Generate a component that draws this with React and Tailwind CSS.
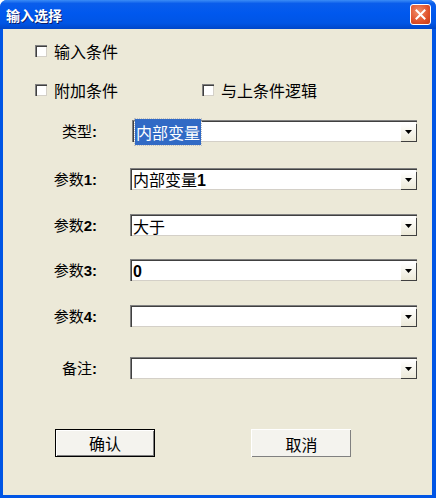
import React from 'react';

const font = { fontFamily: '"Noto Sans CJK SC", "Liberation Sans", sans-serif' };

const Checkbox = ({ label }) => (
  <div className="flex items-center h-[22px]">
    <span className="w-[12px] h-[12px] bg-white border-t border-l border-[#808080] border-b-white border-r-white shadow-[inset_1px_1px_0_#404040,inset_-1px_-1px_0_#d4d0c8]" />
    <span className="ml-[7px] text-[16px] leading-none text-black">{label}</span>
  </div>
);

const Arrow = () => (
  <div className="ml-auto mr-[1px] w-[16px] h-[18px] flex items-center justify-center bg-[linear-gradient(to_bottom,#ffffff,#ece9d8)] border-t border-l border-white border-b-[#808080] border-r-[#808080] shadow-[1px_1px_0_#404040]">
    <svg width="7" height="4" viewBox="0 0 7 4">
      <path d="M0 0H7L3.5 4Z" fill="#000" />
    </svg>
  </div>
);

const Combo = ({ children, offset }) => (
  <div className={`${offset} h-[22px] flex items-center bg-white border-t border-l border-[#808080] border-b-white border-r-white shadow-[inset_1px_1px_0_#404040,inset_-1px_-1px_0_#d4d0c8]`}>
    <div className="pl-[2px] text-[16px] leading-none text-black whitespace-nowrap">{children}</div>
    <Arrow />
  </div>
);

const Bold = ({ children }) => (
  <span className="font-bold" style={{ fontFamily: '"Liberation Sans", sans-serif' }}>{children}</span>
);

const Row = ({ label, digit, children, top, offset = 'ml-[33px] w-[287px]' }) => (
  <div className={`flex items-center h-[22px] ${top}`}>
    <div className="w-[94px] text-right text-[15px] leading-none text-black whitespace-nowrap">
      {label}
      {digit && <Bold>{digit}</Bold>}
      <Bold>:</Bold>
    </div>
    <Combo offset={offset}>{children}</Combo>
  </div>
);

export default function App() {
  return (
    <div className="w-[436px] h-[498px] bg-white" style={font}>
      <div className="w-full h-full flex flex-col bg-[#0055E5] rounded-t-[7px] overflow-hidden">
        {/* Title bar */}
        <div className="h-[29px] flex items-center justify-between pl-[6px] pr-[5px] bg-[linear-gradient(to_bottom,#3B8CF6_0%,#0A5DEB_12%,#0058EE_45%,#0055E5_80%,#0046C8_100%)]">
          <span className="text-white font-bold text-[14px] leading-none [text-shadow:1px_1px_0_#0A1E6E]">输入选择</span>
          <div className="w-[21px] h-[21px] rounded-[3px] border border-white bg-[radial-gradient(circle_at_40%_35%,#F0906C,#E0512A_60%,#C23A17)] flex items-center justify-center">
            <svg width="11" height="11" viewBox="0 0 11 11">
              <path d="M1.5 1.5L9.5 9.5M9.5 1.5L1.5 9.5" stroke="#fff" strokeWidth="2" strokeLinecap="square" />
            </svg>
          </div>
        </div>

        {/* Body */}
        <div className="flex-1 ml-[3px] mr-[4px] mb-[3px] bg-[#ECE9D8] flex flex-col">
          <div className="mt-[11px] pl-[32px]">
            <Checkbox label="输入条件" />
          </div>
          <div className="mt-[17px] pl-[32px] flex">
            <Checkbox label="附加条件" />
            <div className="ml-[84px]">
              <Checkbox label="与上条件逻辑" />
            </div>
          </div>

          <Row label="类型" top="mt-[19px]" offset="ml-[35px] w-[285px]">
            <span className="bg-[#316AC5] text-white px-[1px] py-[1px] outline outline-1 outline-dotted outline-[#c0c0c0]">内部变量</span>
          </Row>
          <Row label="参数" digit="1" top="mt-[26px]">
            内部变量<Bold>1</Bold>
          </Row>
          <Row label="参数" digit="2" top="mt-[24px]">
            大于
          </Row>
          <Row label="参数" digit="3" top="mt-[23px]">
            <Bold>0</Bold>
          </Row>
          <Row label="参数" digit="4" top="mt-[24px]">
            {''}
          </Row>
          <Row label="备注" top="mt-[30px]">
            {''}
          </Row>

          <div className="mt-[50px] flex pl-[52px]">
            <button className="w-[100px] h-[28px] border border-black bg-[#F4F3EE] shadow-[inset_1px_1px_0_#fff,inset_-1px_-1px_0_#808080] text-[16px] leading-none text-black">
              确认
            </button>
            <button className="ml-[96px] w-[100px] h-[28px] border-t border-l border-white border-b-[#404040] border-r-[#404040] bg-[#F4F3EE] shadow-[inset_-1px_-1px_0_#808080] text-[16px] leading-none text-black">
              取消
            </button>
          </div>
        </div>
      </div>
    </div>
  );
}
